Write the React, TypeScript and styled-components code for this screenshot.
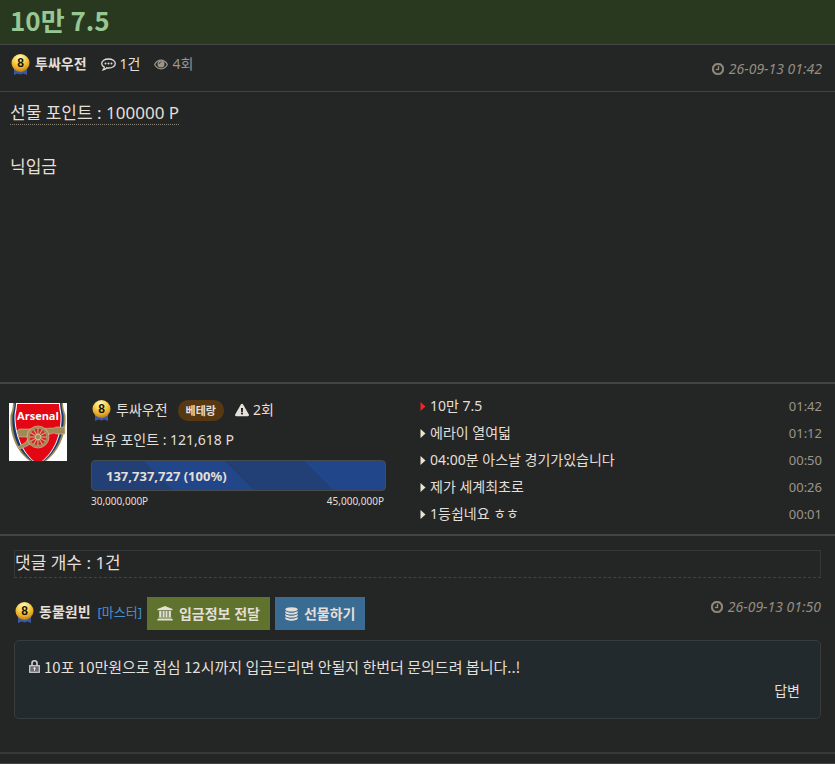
import React from "react";
import styled, { createGlobalStyle } from "styled-components";
import { FaExclamationTriangle } from "react-icons/fa";

const GlobalStyle = createGlobalStyle`
  * { box-sizing: border-box; }
  body {
    margin: 0;
    background: #242625;
    color: #e4dfd8;
    font-family: "Noto Sans", "Noto Sans CJK KR", sans-serif;
    font-size: 14px;
    line-height: 20px;
  }
  a { color: inherit; text-decoration: none; }
  svg { flex: none; display: block; }
`;

const TitleBar = styled.header`
  background: #283920;
  border-bottom: 1px solid #464846;
  padding: 2px 10px 6px;
`;

const Title = styled.h1`
  margin: 0;
  color: #98c793;
  font-family: "Noto Sans CJK KR", sans-serif;
  font-size: 26px;
  font-weight: 700;
  line-height: 36px;
`;

const MetaBar = styled.div`
  display: flex;
  justify-content: space-between;
  align-items: flex-start;
  border-bottom: 1px solid #414342;
  height: 47px;
  padding: 7px 13px 0 10px;
`;

const Group = styled.div<{ $gap: number; $lift?: number }>`
  display: flex;
  align-items: center;
  gap: ${(p) => p.$gap}px;
  padding-bottom: ${(p) => p.$lift ?? 0}px;
`;

const Stat = styled.span<{ $dim?: boolean }>`
  display: flex;
  align-items: center;
  gap: 4px;
  color: ${(p) => (p.$dim ? "#9c958a" : "#e4dfd8")};
`;

const UserLink = styled.a<{ $bold?: boolean }>`
  display: flex;
  align-items: center;
  gap: 5px;
  font-weight: ${(p) => (p.$bold ? 700 : 400)};
`;

const DateText = styled.time<{ $top: number }>`
  display: flex;
  align-items: center;
  gap: 5px;
  padding-top: ${(p) => p.$top}px;
  color: #958d81;
  font-style: italic;
`;

const Article = styled.article`
  min-height: 290px;
  padding: 7px 10px;
  font-size: 17px;
  line-height: 27px;
`;

const GiftPoint = styled.span`
  display: inline-block;
  line-height: 22px;
  border-bottom: 1px dotted #8b8479;
`;

const Paragraph = styled.p`
  margin: 0 0 27px;
`;

const Profile = styled.section`
  display: grid;
  grid-template-columns: 57px 320px minmax(0, 1fr);
  border-top: 2px solid #434544;
  border-bottom: 2px solid #434544;
  height: 154px;
  padding: 8px 13px 0 9px;
`;

const Avatar = styled.div`
  padding-top: 11px;
`;

const Summary = styled.div`
  margin-left: 25px;
  padding-top: 6px;
`;

const Rank = styled.span`
  margin-left: 6px;
  padding: 0 8px;
  border-radius: 10px;
  background: #573813;
  color: #e4dfd8;
  font-size: 11px;
  font-weight: 700;
  line-height: 21px;
`;

const Warnings = styled.span`
  display: flex;
  align-items: center;
  gap: 4px;
  margin-left: 7px;
`;

const Points = styled.div`
  margin: 8px 0 10px;
`;

const Progress = styled.div`
  height: 31px;
  padding-left: 14px;
  border: 1px solid #484b4e;
  border-radius: 4px;
  background: repeating-linear-gradient(45deg, #234076 0 57px, #22468a 57px 114px);
  font-size: 13px;
  font-weight: 700;
  line-height: 30px;
`;

const Range = styled.div`
  display: flex;
  justify-content: space-between;
  padding: 2px 2px 0 0;
  font-size: 10px;
  line-height: 16px;
`;

const PostList = styled.ul`
  margin: 0 0 0 34px;
  padding: 0;
  list-style: none;
`;

const PostItem = styled.li`
  display: flex;
  align-items: center;
  height: 27px;
`;

const PostLink = styled.a`
  display: flex;
  align-items: center;
  gap: 4px;
  flex: 1;
`;

const PostTime = styled.time`
  color: #9c958a;
  font-size: 13px;
`;

const Comments = styled.section`
  border-bottom: 2px solid #373938;
  padding: 14px 14px 33px;
`;

const CommentCount = styled.h2`
  margin: 0 0 19px;
  padding-bottom: 3px;
  border: 1px solid #363837;
  border-bottom: 1px dashed #414342;
  font-size: 17px;
  font-weight: 400;
  line-height: 23px;
`;

const CommentHead = styled.div`
  display: flex;
  justify-content: space-between;
  align-items: flex-start;
  margin-bottom: 10px;
`;

const Master = styled.span`
  margin-left: 2px;
  color: #4a90ce;
  font-size: 13px;
`;

const ActionButton = styled.button<{ $color: string }>`
  display: flex;
  align-items: center;
  gap: 6px;
  height: 33px;
  padding: 0 10px;
  border: 0;
  background: ${(p) => p.$color};
  color: #e4dfd8;
  font: 700 14px/20px "Noto Sans", "Noto Sans CJK KR", sans-serif;
  cursor: pointer;
`;

const CommentBox = styled.div`
  height: 79px;
  padding: 16px 20px 0 14px;
  border: 1px solid #383c3d;
  border-radius: 5px;
  background: #222a2d;
`;

const CommentText = styled.p`
  display: flex;
  align-items: center;
  gap: 4px;
  margin: 0 0 5px;
  font-family: "Noto Sans CJK KR", sans-serif;
  font-size: 15px;
  line-height: 19px;
`;

const Reply = styled.a`
  display: block;
  width: fit-content;
  margin-left: auto;
`;

const BottomEdge = styled.footer`
  margin-top: 9px;
  border-top: 1px solid #434544;
`;

function Medal() {
  return (
    <svg width="20" height="24" viewBox="0 0 20 24" aria-hidden="true">
      <defs>
        <radialGradient id="gold" cx="45%" cy="22%" r="75%">
          <stop offset="0" stopColor="#fffac0" />
          <stop offset="0.45" stopColor="#f8d351" />
          <stop offset="0.8" stopColor="#e5a525" />
          <stop offset="1" stopColor="#b8821f" />
        </radialGradient>
      </defs>
      <path d="M4 15v8l3.500-1.500 3 1 3-1 3.500 1.500v-8z" fill="#3d58a0" />
      <circle cx="10.500" cy="11" r="9" fill="url(#gold)" />
      <text x="10.500" y="15" textAnchor="middle" fontFamily="Liberation Sans" fontWeight="700" fontSize="12" fill="#161208">8</text>
    </svg>
  );
}

function ClockIcon() {
  return (
    <svg width="12" height="12" viewBox="0 128 1536 1536" fill="currentColor" stroke="currentColor" strokeWidth="50" aria-hidden="true">
      <path d="M896 544v448q0 14-9 23t-23 9h-320q-14 0-23-9t-9-23v-64q0-14 9-23t23-9h224v-352q0-14 9-23t23-9h64q14 0 23 9t9 23zm416 352q0-148-73-273t-198-198-273-73-273 73-198 198-73 273 73 273 198 198 273 73 273-73 198-198 73-273zm224 0q0 209-103 385.500t-279.500 279.500-385.500 103-385.500-103-279.500-279.500-103-385.500 103-385.500 279.500-279.500 385.500-103 385.500 103 279.500 279.500 103 385.500z" />
    </svg>
  );
}

function CommentIcon() {
  return (
    <svg width="15" height="13" viewBox="0 0 15 13" aria-hidden="true">
      <path d="M7.500 1C3.700 1 .7 2.900.7 5.500c0 1.500 1 2.800 2.600 3.600-.1 1-.6 1.900-1.200 2.700 1.600-.3 2.800-.9 3.800-2 .5.100 1 .2 1.600.2 3.800 0 6.800-2 6.800-4.500S11.300 1 7.500 1z" fill="none" stroke="currentColor" strokeWidth="1.300" />
      <circle cx="4.500" cy="5.500" r="1" fill="currentColor" />
      <circle cx="7.500" cy="5.500" r="1" fill="currentColor" />
      <circle cx="10.500" cy="5.500" r="1" fill="currentColor" />
    </svg>
  );
}

function EyeIcon() {
  return (
    <svg width="14" height="11" viewBox="0 0 14 11" aria-hidden="true">
      <path d="M.6 5.500C2 3 4.300 1.200 7 1.200s5 1.800 6.400 4.300C12 8 9.700 9.800 7 9.800S2 8 .6 5.500z" fill="none" stroke="currentColor" strokeWidth="1.200" />
      <circle cx="7" cy="4.900" r="3.500" fill="currentColor" />
      <path d="M5.200 4.700A1.800 1.800 0 0 1 7 2.900" fill="none" stroke="#242625" strokeWidth=".7" strokeLinecap="round" />
    </svg>
  );
}

function CaretIcon({ color }: { color: string }) {
  return (
    <svg width="6" height="10" viewBox="0 0 6 10" aria-hidden="true">
      <path d="M.5 1 5.500 5.500.5 10z" fill={color} />
    </svg>
  );
}

function BankIcon() {
  return (
    <svg width="16" height="15" viewBox="0 0 16 15" fill="currentColor" aria-hidden="true">
      <path d="M8 0l7.500 3v1.200h-15V3zM2.200 5h2.300v6H2.200zM5.600 5h2v6h-2zM8.500 5h2v6h-2zM11.600 5h2.300v6h-2.300zM1.400 11.400h13.200v1.100H1.400zM.3 13.100h15.400v1.400H.3z" />
    </svg>
  );
}

function CoinsIcon() {
  return (
    <svg width="13" height="14" viewBox="0 0 13 14" fill="currentColor" aria-hidden="true">
      <ellipse cx="6.500" cy="2.400" rx="6.200" ry="2.200" />
      <path d="M.3 4c1.500 1.400 3.800 1.700 6.200 1.700S11.200 5.400 12.700 4v1.400c0 1.200-2.800 2.200-6.200 2.200S.3 6.600.3 5.400z" />
      <path d="M.3 7c1.500 1.400 3.800 1.700 6.200 1.700S11.200 8.400 12.700 7v1.400c0 1.200-2.800 2.200-6.200 2.200S.3 9.600.3 8.400z" />
      <path d="M.3 10c1.500 1.400 3.800 1.700 6.200 1.700s4.700-.3 6.200-1.700v1.500c0 1.200-2.800 2.200-6.200 2.200S.3 12.700.3 11.500z" />
    </svg>
  );
}

function LockIcon() {
  return (
    <svg width="11" height="13" viewBox="0 0 11 13" aria-hidden="true">
      <path d="M3 6V3.300a2.500 2.500 0 0 1 5 0V6" fill="none" stroke="#d3cfd2" strokeWidth="1.600" />
      <rect x=".7" y="5.700" width="9.600" height="6.600" fill="#6a6b70" stroke="#d3cfd2" strokeWidth="1.200" />
      <path d="M5.500 7.300v3.400M4.300 8.300h2.400" stroke="#eeebe8" strokeWidth="1.100" />
    </svg>
  );
}

function Crest() {
  const spokes = [0, 30, 60, 90, 120, 150];
  return (
    <svg width="58" height="58" viewBox="0 0 58 58" role="img" aria-label="Arsenal">
      <rect width="58" height="58" fill="#fff" />
      <path d="M4 0h50c0 4 1 8 2.500 12C58 33 48 50 37 58H21C9 50 0 33 1.500 12 3 8 4 4 4 0z" fill="#a08a57" />
      <path d="M5.500 0h47c0 4 1 8 2 12C56 33 46 50 35 58H23C11 50 2 33 3.500 12 5 8 5.500 4 5.500 0z" fill="#123b72" />
      <path d="M7 0h44c0 4 1 8 1.500 12 1 21-8 38-18.500 46H24C14 50 5 33 5.500 12 6 8 7 4 7 0z" fill="#fff" />
      <path d="M8 1h42c0 4 1 8 1.500 11 1 21-8 38-18.500 46h-8C15 50 6 33 6.500 12 7 9 8 5 8 1z" fill="#e30613" />
      <path d="M8 28l2-2 9 0 26-1 2-1h9v7h-9l-2-1-7 2-8 4-12 7-7 3-2-2 8-5 3-5-10 0z" fill="#a08a57" stroke="#e9c9a0" strokeWidth=".5" />
      <circle cx="29" cy="34" r="9.500" fill="#d8232a" stroke="#a08a57" strokeWidth="2.500" />
      <circle cx="29" cy="34" r="11" fill="none" stroke="#e2d0a6" strokeWidth=".6" />
      {spokes.map((angle) => (
        <path key={angle} d="M29 25v18" stroke="#c0a878" strokeWidth="1.200" transform={`rotate(${angle} 29 34)`} />
      ))}
      <circle cx="29" cy="34" r="2.800" fill="#a08a57" stroke="#e5d7b5" strokeWidth=".7" />
      <text x="29" y="17" textAnchor="middle" fontFamily="Open Sans" fontWeight="700" fontSize="11" fill="#fff">Arsenal</text>
    </svg>
  );
}

const posts = [
  { title: "10만 7.5", time: "01:42", active: true },
  { title: "에라이 열여덟", time: "01:12" },
  { title: "04:00분 아스날 경기가있습니다", time: "00:50" },
  { title: "제가 세계최초로", time: "00:26" },
  { title: "1등쉽네요 ㅎㅎ", time: "00:01" },
];

export default function App() {
  return (
    <main>
      <GlobalStyle />
      <TitleBar>
        <Title>10만 7.5</Title>
      </TitleBar>
      <MetaBar>
        <Group $gap={14}>
          <UserLink href="#user" $bold><Medal />투싸우전</UserLink>
          <Stat><CommentIcon />1건</Stat>
          <Stat $dim><EyeIcon />4회</Stat>
        </Group>
        <DateText $top={7}><ClockIcon />26-09-13 01:42</DateText>
      </MetaBar>
      <Article>
        <Paragraph><GiftPoint>선물 포인트 : 100000 P</GiftPoint></Paragraph>
        <Paragraph>닉입금</Paragraph>
      </Article>
      <Profile>
        <Avatar><Crest /></Avatar>
        <Summary>
          <Group $gap={4}>
            <UserLink href="#user"><Medal />투싸우전</UserLink>
            <Rank>베테랑</Rank>
            <Warnings><FaExclamationTriangle size={14} />2회</Warnings>
          </Group>
          <Points>보유 포인트 : 121,618 P</Points>
          <Progress role="progressbar" aria-label="포인트" aria-valuenow={100}>137,737,727 (100%)</Progress>
          <Range><span>30,000,000P</span><span>45,000,000P</span></Range>
        </Summary>
        <PostList>
          {posts.map((post) => (
            <PostItem key={post.title}>
              <PostLink href="#post">
                <CaretIcon color={post.active ? "#e02b27" : "#e9e4d6"} />
                {post.title}
              </PostLink>
              <PostTime>{post.time}</PostTime>
            </PostItem>
          ))}
        </PostList>
      </Profile>
      <Comments>
        <CommentCount>댓글 개수 : 1건</CommentCount>
        <CommentHead>
          <Group $gap={5}>
            <Group $gap={5} $lift={4}>
              <UserLink href="#user" $bold><Medal />동물원빈</UserLink>
              <Master>[마스터]</Master>
            </Group>
            <ActionButton type="button" $color="#5f732f"><BankIcon />입금정보 전달</ActionButton>
            <ActionButton type="button" $color="#3a6b93"><CoinsIcon />선물하기</ActionButton>
          </Group>
          <DateText $top={0}><ClockIcon />26-09-13 01:50</DateText>
        </CommentHead>
        <CommentBox>
          <CommentText><LockIcon />10포 10만원으로 점심 12시까지 입금드리면 안될지 한번더 문의드려 봅니다..!</CommentText>
          <Reply href="#reply">답변</Reply>
        </CommentBox>
      </Comments>
      <BottomEdge />
    </main>
  );
}
